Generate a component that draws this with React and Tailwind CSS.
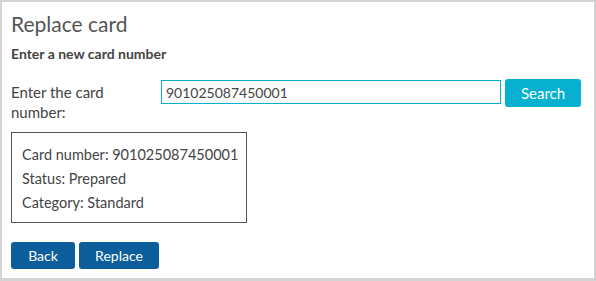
export default function App() {
  return (
    <div className="w-[596px] h-[281px] bg-[#d4d4d4] pt-[2px] pl-[2px]" style={{ fontFamily: "Lato, 'Noto Sans', sans-serif" }}>
      <div className="w-[592px] h-[276px] bg-white text-[#444] pl-[9px] pt-[8px]">
        <h1 className="text-[21px] leading-[28px] text-[#555]">Replace card</h1>
        <div className="mt-[8px] text-[14px] font-bold leading-[16px]">Enter a new card number</div>
        <div className="mt-[18px] flex items-start">
          <div className="w-[150px] text-[15px] leading-[20px] pt-[2px]">Enter the card<br />number:</div>
          <input
            readOnly
            value="901025087450001"
            className="w-[340px] h-[24px] border border-[#06b0d0] px-[4px] text-[14px] text-[#444] outline-none"
          />
          <button className="ml-[4px] -mt-[1px] w-[76px] h-[28px] rounded-[3px] bg-[#05b1cf] text-white text-[15px]">Search</button>
        </div>
        <div className="mt-[10px] w-[236px] h-[91px] border border-[#555] pl-[10px] pt-[10px] text-[14.5px] leading-[24px]">
          <div>Card number: 901025087450001</div>
          <div>Status: Prepared</div>
          <div>Category: Standard</div>
        </div>
        <div className="mt-[19px] flex gap-[4px]">
          <button className="w-[64px] h-[27px] rounded-[3px] bg-[#0c5e9a] text-white text-[14px]">Back</button>
          <button className="w-[80px] h-[27px] rounded-[3px] bg-[#0c5e9a] text-white text-[14px]">Replace</button>
        </div>
      </div>
    </div>
  );
}
